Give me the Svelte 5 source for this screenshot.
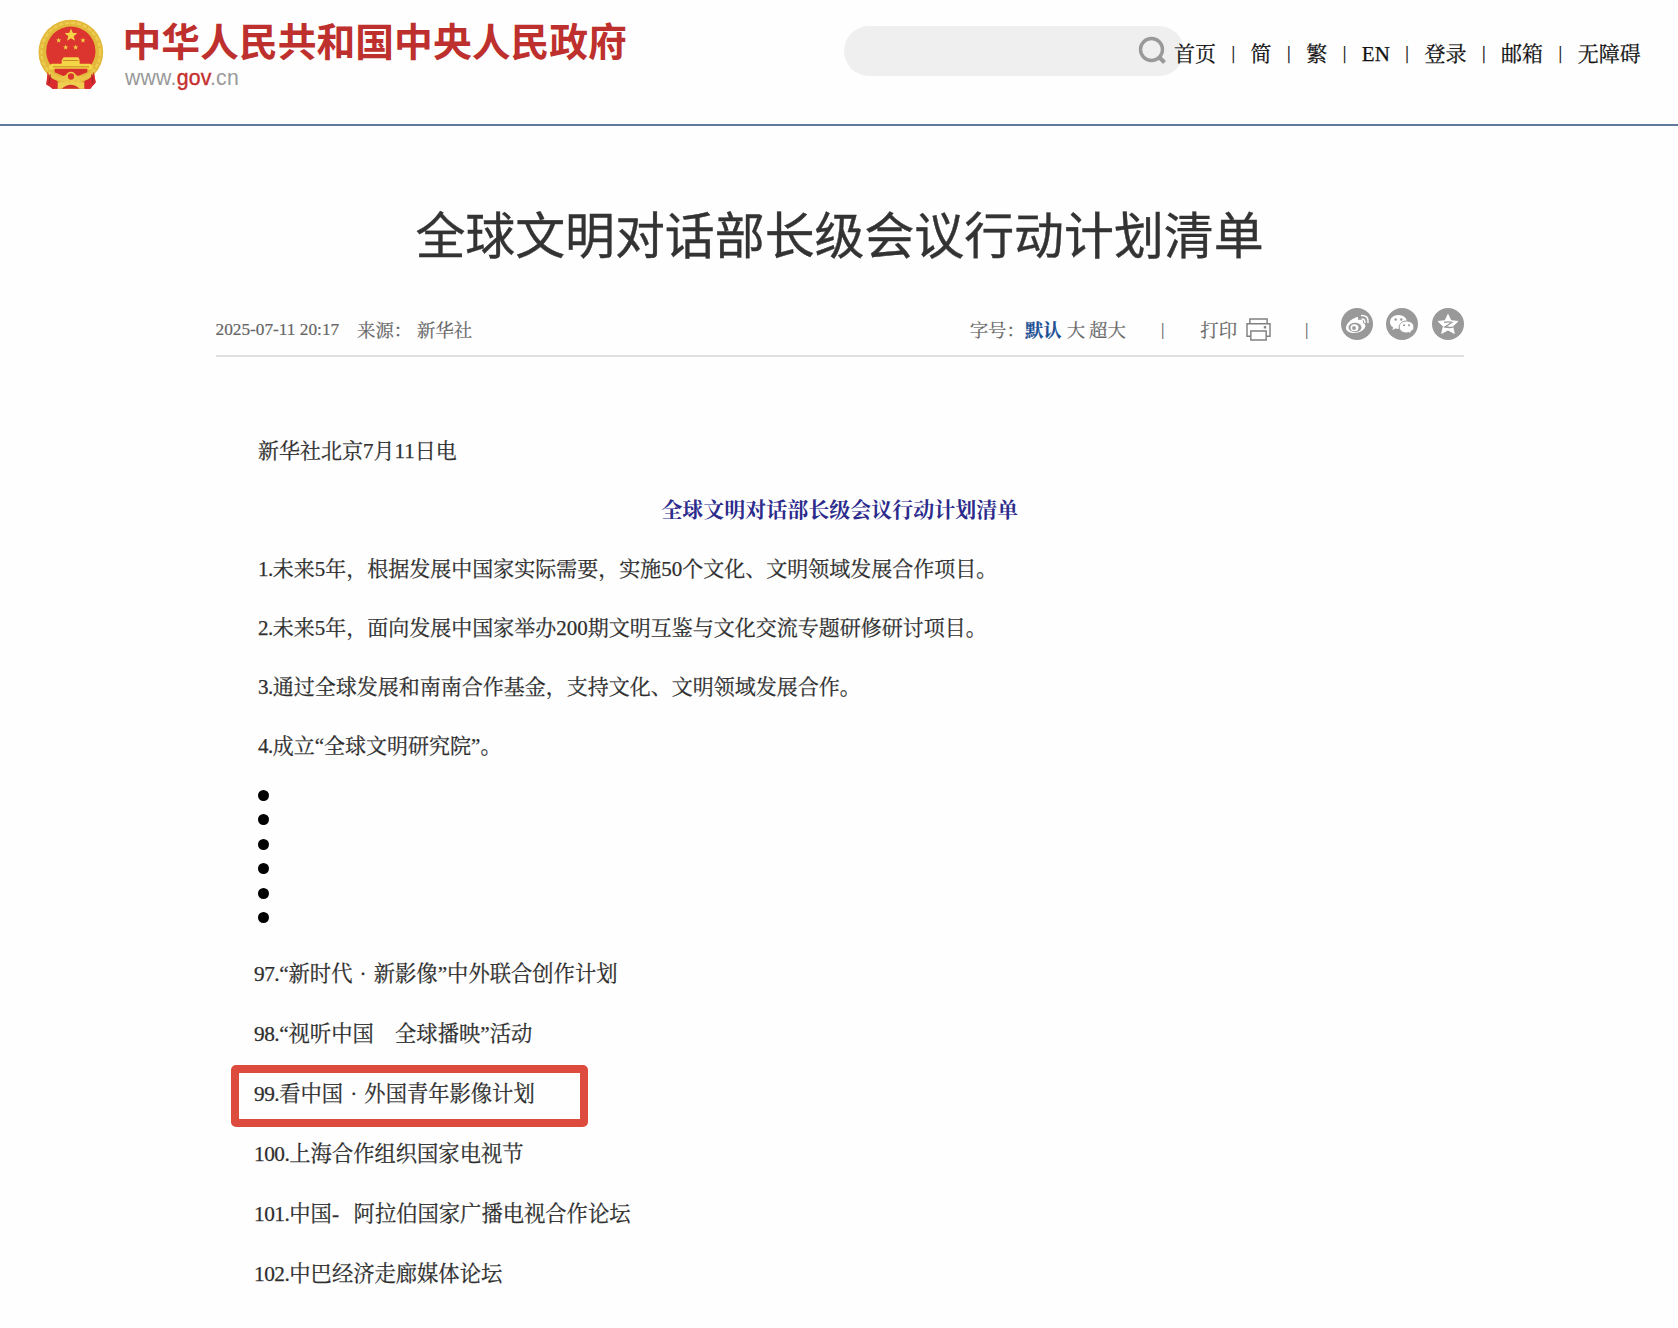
<script>
  const nav = ['首页', '简', '繁', 'EN', '登录', '邮箱', '无障碍'];
  const opening = [
    { no: '1.', text: '未来5年，根据发展中国家实际需要，实施50个文化、文明领域发展合作项目。' },
    { no: '2.', text: '未来5年，面向发展中国家举办200期文明互鉴与文化交流专题研修研讨项目。' },
    { no: '3.', text: '通过全球发展和南南合作基金，支持文化、文明领域发展合作。' },
    { no: '4.', text: '成立“全球文明研究院”。' }
  ];
  const closing = [
    { no: '97.', text: '“新时代·新影像”中外联合创作计划' },
    { no: '98.', text: '“视听中国　全球播映”活动' },
    { no: '99.', text: '看中国·外国青年影像计划', marked: true },
    { no: '100.', text: '上海合作组织国家电视节' },
    { no: '101.', text: '中国-  阿拉伯国家广播电视合作论坛' },
    { no: '102.', text: '中巴经济走廊媒体论坛' }
  ];
</script>

<header>
  <div class="brand">
    <svg class="emblem" viewBox="55 55 198 212" aria-hidden="true">
      <path d="M86 212 L80 254 Q92 260 98 267 H212 L228 248 L221 206Z" fill="#c9252b" />
      <circle cx="153.500" cy="157" r="97" fill="#e3b93c" />
      <circle cx="153.500" cy="157" r="88" fill="none" stroke="#edcd50" stroke-width="7" stroke-dasharray="13 5" />
      <circle cx="153.500" cy="154" r="74" fill="#dc342f" />
      <g fill="#f5d548">
        <path d="M154 86l5 13 14 1-11 9 4 14-12-8-12 8 4-14-11-9 14-1z" />
        <path d="M117 113l2 6 6 0-5 4 2 6-5-4-5 4 2-6-5-4 6 0z" />
        <path d="M190 113l2 6 6 0-5 4 2 6-5-4-5 4 2-6-5-4 6 0z" />
        <path d="M138 134l2 6 6 0-5 4 2 6-5-4-5 4 2-6-5-4 6 0z" />
        <path d="M168 134l2 6 6 0-5 4 2 6-5-4-5 4 2-6-5-4 6 0z" />
        <path d="M132 172h44l4 9v11h31l8 5v12H88v-12l8-5h30v-11z" />
      </g>
      <path d="M130 182h47M100 201h108" stroke="#c58b24" stroke-width="3" />
      <path d="M105 207h98v10l-30 12h-40l-28-12z" fill="#d72f2c" />
      <path d="M92 213q22 28 48 12 14-16 28 0 24 16 46-12v17q-30 18-60 12-34 6-62-12z" fill="#edc44a" />
      <circle cx="154" cy="230" r="12" fill="#d9362d" stroke="#f0cb4b" stroke-width="5" />
      <path d="M84 216q6 24 28 27v24H98q-8-9-18-13zM222 216q-6 24-26 27v24h16q6-10 16-19z" fill="#d92a2e" />
      <path d="M114 247h80v20h-80z" fill="#efcf50" />
      <path d="M126 267q28-25 54 0z" fill="#cf302b" />
      <path d="M92 224l-4 28M216 224l4 27" stroke="#99202a" stroke-width="3" />
    </svg>
    <div class="names">
      <div class="name">中华人民共和国中央人民政府</div>
      <div class="site">www.<span>gov</span>.cn</div>
    </div>
  </div>
  <div class="search">
    <svg viewBox="0 0 30 30" fill="none" stroke="#999" stroke-width="3.400" aria-hidden="true">
      <circle cx="13.500" cy="13.500" r="11" />
      <path d="M20.500 20.500l2 2 4 4" stroke-width="4" />
    </svg>
  </div>
  <nav>
    {#each nav as item, i}
      {#if i}<i>|</i>{/if}<span>{item}</span>
    {/each}
  </nav>
</header>

<main>
  <h1>全球文明对话部长级会议行动计划清单</h1>
  <div class="meta">
    <span class="date">2025-07-11 20:17</span>
    <span class="source">来源：</span>
    <span class="agency">新华社</span>
    <div class="tools">
      <span class="label">字号：</span><b>默认</b><span class="large">大</span><span>超大</span>
      <i>|</i>
      <span>打印</span>
      <svg class="printer" viewBox="0 0 26 24" fill="none" stroke="#808080" stroke-width="1.500" aria-hidden="true">
        <path d="M4 6V1h18v5M5 19H1V6h24v13h-4" />
        <path d="M5 13.500h16V23H5z" />
        <path d="M18.500 9.700h2.500" stroke-width="2.500" />
      </svg>
      <i class="last">|</i>
      <div class="share">
        <svg viewBox="0 0 32 32" aria-hidden="true">
          <circle cx="16" cy="16" r="16" fill="#999" />
          <path d="M14 10c2-2 4-1 3 2 4-1 6 0 5 3 3 1 3 4 1 6-5 6-18 5-18-1 0-4 5-9 9-10z" fill="#fff" />
          <ellipse cx="14" cy="19.500" rx="6.500" ry="4.700" fill="#999" />
          <ellipse cx="13.500" cy="19.700" rx="4" ry="3.500" fill="#fff" />
          <circle cx="13" cy="20" r="1.900" fill="#999" />
          <path d="M20 7.500q8-.5 7 7.500M20.500 11q4 0 3.300 4" fill="none" stroke="#fff" stroke-width="1.500" />
        </svg>
        <svg viewBox="0 0 32 32" aria-hidden="true">
          <circle cx="16" cy="16" r="16" fill="#999" />
          <path d="M12.500 7C7.500 7 4 10 4 14c0 2.500 1.200 4.300 3.200 5.500L6.300 22l3.200-1.600c7 1.600 11.500-2 11.500-6.400C21 10 17.500 7 12.500 7z" fill="#fff" />
          <path d="M20.500 13c-4 0-7.300 2.500-7.300 6s3.300 6 7.300 6l2.300-.4 2.600 1.400-.7-2.300c2-1 3.200-2.700 3.200-4.700 0-3.500-3.400-6-7.400-6z" fill="#fff" stroke="#999" />
          <g fill="#999"><circle cx="9.700" cy="11.500" r="1.200" /><circle cx="15.300" cy="11.500" r="1.200" /><circle cx="18" cy="17.300" r="1" /><circle cx="23" cy="17.300" r="1" /></g>
        </svg>
        <svg viewBox="0 0 32 32" aria-hidden="true">
          <circle cx="16" cy="16" r="16" fill="#999" />
          <path d="M16 6.500l2.900 6.200 7 .7-5.300 4.900 1.700 7.100-6.300-3.500-6.300 3.500 1.700-7.100-5.300-4.900 7-.7z" fill="#fff" stroke="#fff" stroke-linejoin="round" />
          <path d="M12 14.300q4.500-1 8 0l-7 4.700q4.500.9 8 .1" fill="none" stroke="#999" stroke-width="1.300" />
        </svg>
      </div>
    </div>
  </div>

  <article>
    <p>新华社北京7月11日电</p>
    <p class="heading">全球文明对话部长级会议行动计划清单</p>
    {#each opening as row}
      <p><span class="no">{row.no}</span>{row.text}</p>
    {/each}
  </article>
  <div class="dots">
    {#each Array(6) as _}<span></span>{/each}
  </div>
  <article class="closing">
    {#each closing as row}
      <p class:marked={row.marked}><span class="no">{row.no}</span>{#each row.text.split('·') as part, i}{#if i}<span class="mid">·</span>{/if}{part}{/each}</p>
    {/each}
  </article>
</main>

<style>
  :global(body) {
    background: #fefefe;
  }
  header,
  main {
    font-family: 'Liberation Serif', 'Noto Serif CJK SC', 'Noto Sans CJK SC', serif;
    white-space: nowrap;
  }
  i {
    font-style: normal;
  }
  header {
    box-sizing: border-box;
    height: 126px;
    border-bottom: 2px solid #60799c;
    display: flex;
    align-items: flex-start;
  }
  .brand {
    display: flex;
    width: 806px;
    padding: 18px 0 0 38px;
  }
  .emblem {
    width: 66px;
    height: 71px;
  }
  .names {
    padding-left: 18.500px;
  }
  .name {
    font: bold 38.800px/42px 'Noto Sans CJK SC', sans-serif;
    color: #bd302d;
  }
  .site {
    font: 21.200px/24px 'Liberation Sans', sans-serif;
    letter-spacing: 0.250px;
    color: #999;
    padding: 6px 0 0 2.500px;
  }
  .site span {
    color: #c5302f;
    -webkit-text-stroke: 0.400px #c5302f;
  }
  .search {
    box-sizing: border-box;
    width: 340px;
    height: 50px;
    margin-top: 26px;
    border-radius: 25px;
    background: #efefef;
    display: flex;
    justify-content: flex-end;
    padding: 10px 16px 0 0;
  }
  .search svg {
    width: 30px;
    height: 30px;
  }
  nav {
    display: flex;
    gap: 15.500px;
    margin: 39px 0 0 -10px;
    font-size: 21px;
    line-height: 30px;
    color: #111;
    -webkit-text-stroke: 0.250px #111;
  }
  nav i {
    font-size: 18px;
    margin-top: -1px;
  }
  main {
    width: 1248px;
    margin: 0 auto;
    padding-left: 1px;
  }
  h1 {
    margin: 0;
    padding-top: 69px;
    font: 400 49.900px/74px 'Noto Sans CJK SC', sans-serif;
    text-align: center;
    color: #333;
    -webkit-text-stroke: 0.400px #333;
  }
  .meta {
    box-sizing: border-box;
    height: 88px;
    border-bottom: 2px solid #e0e0e0;
    display: flex;
    padding-top: 47px;
    font-size: 18.400px;
    line-height: 30px;
    color: #666;
    -webkit-text-stroke: 0.200px;
  }
  .date {
    font-size: 17.300px;
    width: 141.500px;
    margin-top: -1px;
  }
  .source {
    width: 60px;
  }
  .tools {
    flex: 1;
    display: flex;
    justify-content: flex-end;
  }
  .tools b {
    color: #1c4f94;
    margin-right: 5px;
  }
  .large {
    margin-right: 4px;
  }
  .tools i {
    margin: -1px 36px 0 35px;
    font-size: 17px;
  }
  .tools .last {
    margin: -1px 32px 0 34px;
  }
  .printer {
    width: 25px;
    height: 23px;
    margin: 2px 0 0 9px;
  }
  .share {
    display: flex;
    gap: 13.500px;
    margin-top: -8px;
  }
  .share svg {
    width: 32px;
    height: 32px;
  }
  article {
    padding: 65px 0 0 42.500px;
    color: #2e2e2e;
    font-size: 21px;
    -webkit-text-stroke: 0.250px;
  }
  p {
    margin: 0;
    height: 59px;
    line-height: 59px;
    white-space: pre;
  }
  .no {
    letter-spacing: -0.500px;
  }
  .heading {
    font-weight: bold;
    text-align: center;
    margin-left: -42px;
    color: #2c2b8c;
    -webkit-text-stroke: 0;
  }
  .dots {
    display: flex;
    flex-direction: column;
    gap: 13.400px;
    padding: 14px 0 0 42.500px;
  }
  .dots span {
    width: 11px;
    height: 11px;
    border-radius: 50%;
    background: #000;
  }
  .closing {
    padding: 21px 0 0 38.500px;
    font-size: 21.300px;
    word-spacing: 2px;
  }
  .closing p {
    height: 60px;
    line-height: 60px;
  }
  .mid {
    display: inline-block;
    width: 1em;
    text-align: center;
  }
  .marked {
    position: relative;
  }
  .marked::before {
    content: '';
    position: absolute;
    box-sizing: border-box;
    left: -23.500px;
    top: 1px;
    width: 357px;
    height: 62px;
    border: 8px solid #dc4b3d;
    border-radius: 5px;
  }
</style>
